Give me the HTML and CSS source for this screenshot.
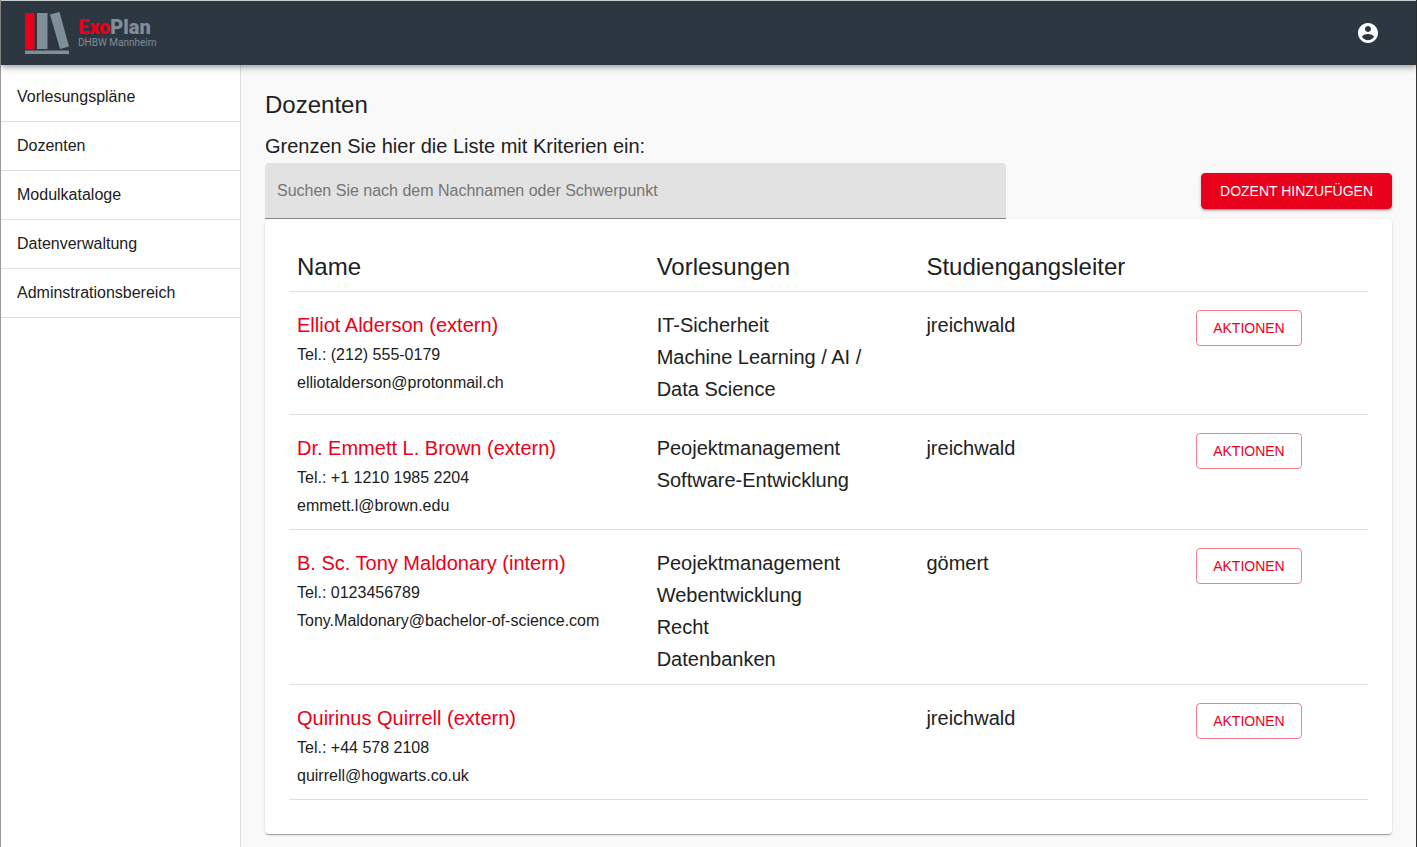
FILE: index.html
```html
<!DOCTYPE html>
<html lang="de">
<head>
<meta charset="utf-8">
<title>ExoPlan – Dozenten</title>
<meta name="viewport" content="width=device-width, initial-scale=1">
<link rel="stylesheet" href="styles.css">
</head>
<body>
<div class="app">
  <header class="topbar">
    <a class="brand" href="#">
      <svg class="brand-icon" width="46" height="44" viewBox="0 0 46 44" aria-hidden="true">
        <path fill="#e9001a" d="M1 2h9.500v36H1z"/>
        <path fill="#7f8e98" d="M13 2h10.500v36H13zM26 3.500l9.500-2.500 9.500 34.500-9 2.500zM1 39.500h44V43H1z"/>
      </svg>
      <span class="brand-text">
        <span class="brand-name"><span class="brand-accent">Exo</span>Plan</span>
        <span class="brand-sub">DHBW Mannheim</span>
      </span>
    </a>
    <button class="account" type="button" aria-label="Benutzerkonto">
      <svg width="24" height="24" viewBox="0 0 24 24" fill="currentColor" aria-hidden="true"><path d="M12 2C6.480 2 2 6.480 2 12s4.480 10 10 10 10-4.480 10-10S17.520 2 12 2zm0 3c1.660 0 3 1.340 3 3s-1.340 3-3 3-3-1.340-3-3 1.340-3 3-3zm0 14.200c-2.500 0-4.710-1.280-6-3.220.03-1.990 4-3.080 6-3.080 1.990 0 5.970 1.090 6 3.080-1.290 1.940-3.500 3.220-6 3.220z"/></svg>
    </button>
  </header>
  <div class="layout">
    <nav class="sidebar">
      <a class="nav-item" href="#">Vorlesungspläne</a>
      <a class="nav-item" href="#">Dozenten</a>
      <a class="nav-item" href="#">Modulkataloge</a>
      <a class="nav-item" href="#">Datenverwaltung</a>
      <a class="nav-item" href="#">Adminstrationsbereich</a>
    </nav>
    <main class="content">
      <h1 class="page-title">Dozenten</h1>
      <label class="filter-label" for="search">Grenzen Sie hier die Liste mit Kriterien ein:</label>
      <div class="toolbar">
        <input class="search" id="search" type="text" placeholder="Suchen Sie nach dem Nachnamen oder Schwerpunkt">
        <button class="btn btn-primary" type="button">DOZENT HINZUFÜGEN</button>
      </div>
      <section class="card">
        <table class="lecturers">
          <colgroup><col class="col-name"><col class="col-courses"><col class="col-head"><col class="col-actions"></colgroup>
          <thead>
            <tr><th scope="col">Name</th><th scope="col">Vorlesungen</th><th scope="col">Studiengangsleiter</th><td></td></tr>
          </thead>
          <tbody>
            <tr>
              <td><a class="name" href="#">Elliot Alderson (extern)</a><p class="contact">Tel.: (212) 555-0179</p><p class="contact">elliotalderson@protonmail.ch</p></td>
              <td><p class="course">IT-Sicherheit</p><p class="course">Machine Learning / AI / Data Science</p></td>
              <td>jreichwald</td>
              <td class="actions"><button class="btn btn-outline" type="button">AKTIONEN</button></td>
            </tr>
            <tr>
              <td><a class="name" href="#">Dr. Emmett L. Brown (extern)</a><p class="contact">Tel.: +1 1210 1985 2204</p><p class="contact">emmett.l@brown.edu</p></td>
              <td><p class="course">Peojektmanagement</p><p class="course">Software-Entwicklung</p></td>
              <td>jreichwald</td>
              <td class="actions"><button class="btn btn-outline" type="button">AKTIONEN</button></td>
            </tr>
            <tr>
              <td><a class="name" href="#">B. Sc. Tony Maldonary (intern)</a><p class="contact">Tel.: 0123456789</p><p class="contact">Tony.Maldonary@bachelor-of-science.com</p></td>
              <td><p class="course">Peojektmanagement</p><p class="course">Webentwicklung</p><p class="course">Recht</p><p class="course">Datenbanken</p></td>
              <td>gömert</td>
              <td class="actions"><button class="btn btn-outline" type="button">AKTIONEN</button></td>
            </tr>
            <tr>
              <td><a class="name" href="#">Quirinus Quirrell (extern)</a><p class="contact">Tel.: +44 578 2108</p><p class="contact">quirrell@hogwarts.co.uk</p></td>
              <td></td>
              <td>jreichwald</td>
              <td class="actions"><button class="btn btn-outline" type="button">AKTIONEN</button></td>
            </tr>
          </tbody>
        </table>
      </section>
    </main>
  </div>
</div>
</body>
</html>
```

FILE: styles.css
```css
* { box-sizing: border-box; }

body {
  margin: 0;
  color: #212121;
  background: #f9f9f9;
  font-family: "Liberation Sans", Arial, sans-serif;
  font-size: 16px;
}

p, h1 { margin: 0; }
a { color: inherit; text-decoration: none; }
button, input { font-family: inherit; }

.app {
  display: flex;
  flex-direction: column;
  min-height: 100vh;
  border-left: 1px solid #9a9a9a;
  border-right: 1px solid #333;
}

.topbar {
  position: relative;
  z-index: 1;
  display: flex;
  align-items: center;
  justify-content: space-between;
  height: 65px;
  padding: 0 24px;
  border-top: 1px solid #c9cdd0;
  background: #2d3741;
  box-shadow: 0 2px 4px -1px rgba(0, 0, 0, .2), 0 4px 5px rgba(0, 0, 0, .14), 0 1px 10px rgba(0, 0, 0, .12);
}

.brand { display: flex; align-items: center; gap: 8px; }
.brand-icon { display: block; margin-left: -1px; }
.brand-text { display: flex; flex-direction: column; font-family: Roboto, sans-serif; color: #7f8e98; }
.brand-name { font-size: 20px; line-height: 20px; font-weight: 900; }
.brand-accent { color: #e9001a; }
.brand-sub { font-size: 10px; line-height: 12px; font-weight: 400; }

.account {
  display: flex;
  padding: 12px;
  border: 0;
  background: none;
  color: #fff;
  cursor: pointer;
}

.layout { display: flex; flex: 1; }

.sidebar {
  flex: 0 0 240px;
  padding-top: 8px;
  border-right: 1px solid #dedede;
  background: #fff;
}

.nav-item {
  display: block;
  padding: 12px 16px;
  border-bottom: 1px solid #dedede;
  line-height: 24px;
}

.content { flex: 1; min-width: 0; padding: 24px 24px 12px; }

.page-title { margin-bottom: 8px; font-size: 24px; font-weight: 400; line-height: 32px; }
.filter-label { display: block; font-size: 20px; line-height: 34px; }

.toolbar {
  display: grid;
  grid-template-columns: 2fr 1fr;
  gap: 16px;
  align-items: center;
}

.search {
  width: 100%;
  height: 56px;
  padding: 0 12px;
  border: 0;
  border-bottom: 1px solid #858585;
  border-radius: 4px 4px 0 0;
  background: #e2e2e2;
  color: #212121;
  font-size: 16px;
}
.search::placeholder { color: #757575; opacity: 1; }

.btn {
  height: 36px;
  padding: 0 16px;
  border-radius: 4px;
  font-size: 14px;
  line-height: 24px;
  cursor: pointer;
}
.btn-primary {
  justify-self: end;
  padding: 0 18px;
  border: 1px solid #e9001a;
  background: #e9001a;
  color: #fff;
  box-shadow: 0 3px 1px -2px rgba(0, 0, 0, .2), 0 2px 2px rgba(0, 0, 0, .14), 0 1px 5px rgba(0, 0, 0, .12);
}
.btn-outline {
  display: block;
  border: 1px solid #f4808d;
  background: transparent;
  color: #e9001a;
}

.card {
  padding: 24px 24px 34px;
  border-radius: 4px;
  background: #fff;
  box-shadow: 0 2px 1px -1px rgba(0, 0, 0, .2), 0 1px 1px rgba(0, 0, 0, .14), 0 1px 3px rgba(0, 0, 0, .12);
}

.lecturers {
  width: 100%;
  table-layout: fixed;
  border-spacing: 0;
  font-size: 20px;
  line-height: 32px;
}
.col-name { width: 33.333%; }
.col-courses, .col-head { width: 25%; }
.col-actions { width: 16.667%; }

.lecturers th,
.lecturers td {
  padding: 17px 16px 9px 8px;
  border-bottom: 1px solid #dedede;
  text-align: left;
  vertical-align: top;
}
.lecturers th, .lecturers thead td { padding: 8px; font-size: 24px; font-weight: 400; }
.lecturers .actions { padding-top: 18px; }

.name { display: block; color: #e9001a; }
.contact { font-size: 16px; line-height: 28px; }
```
